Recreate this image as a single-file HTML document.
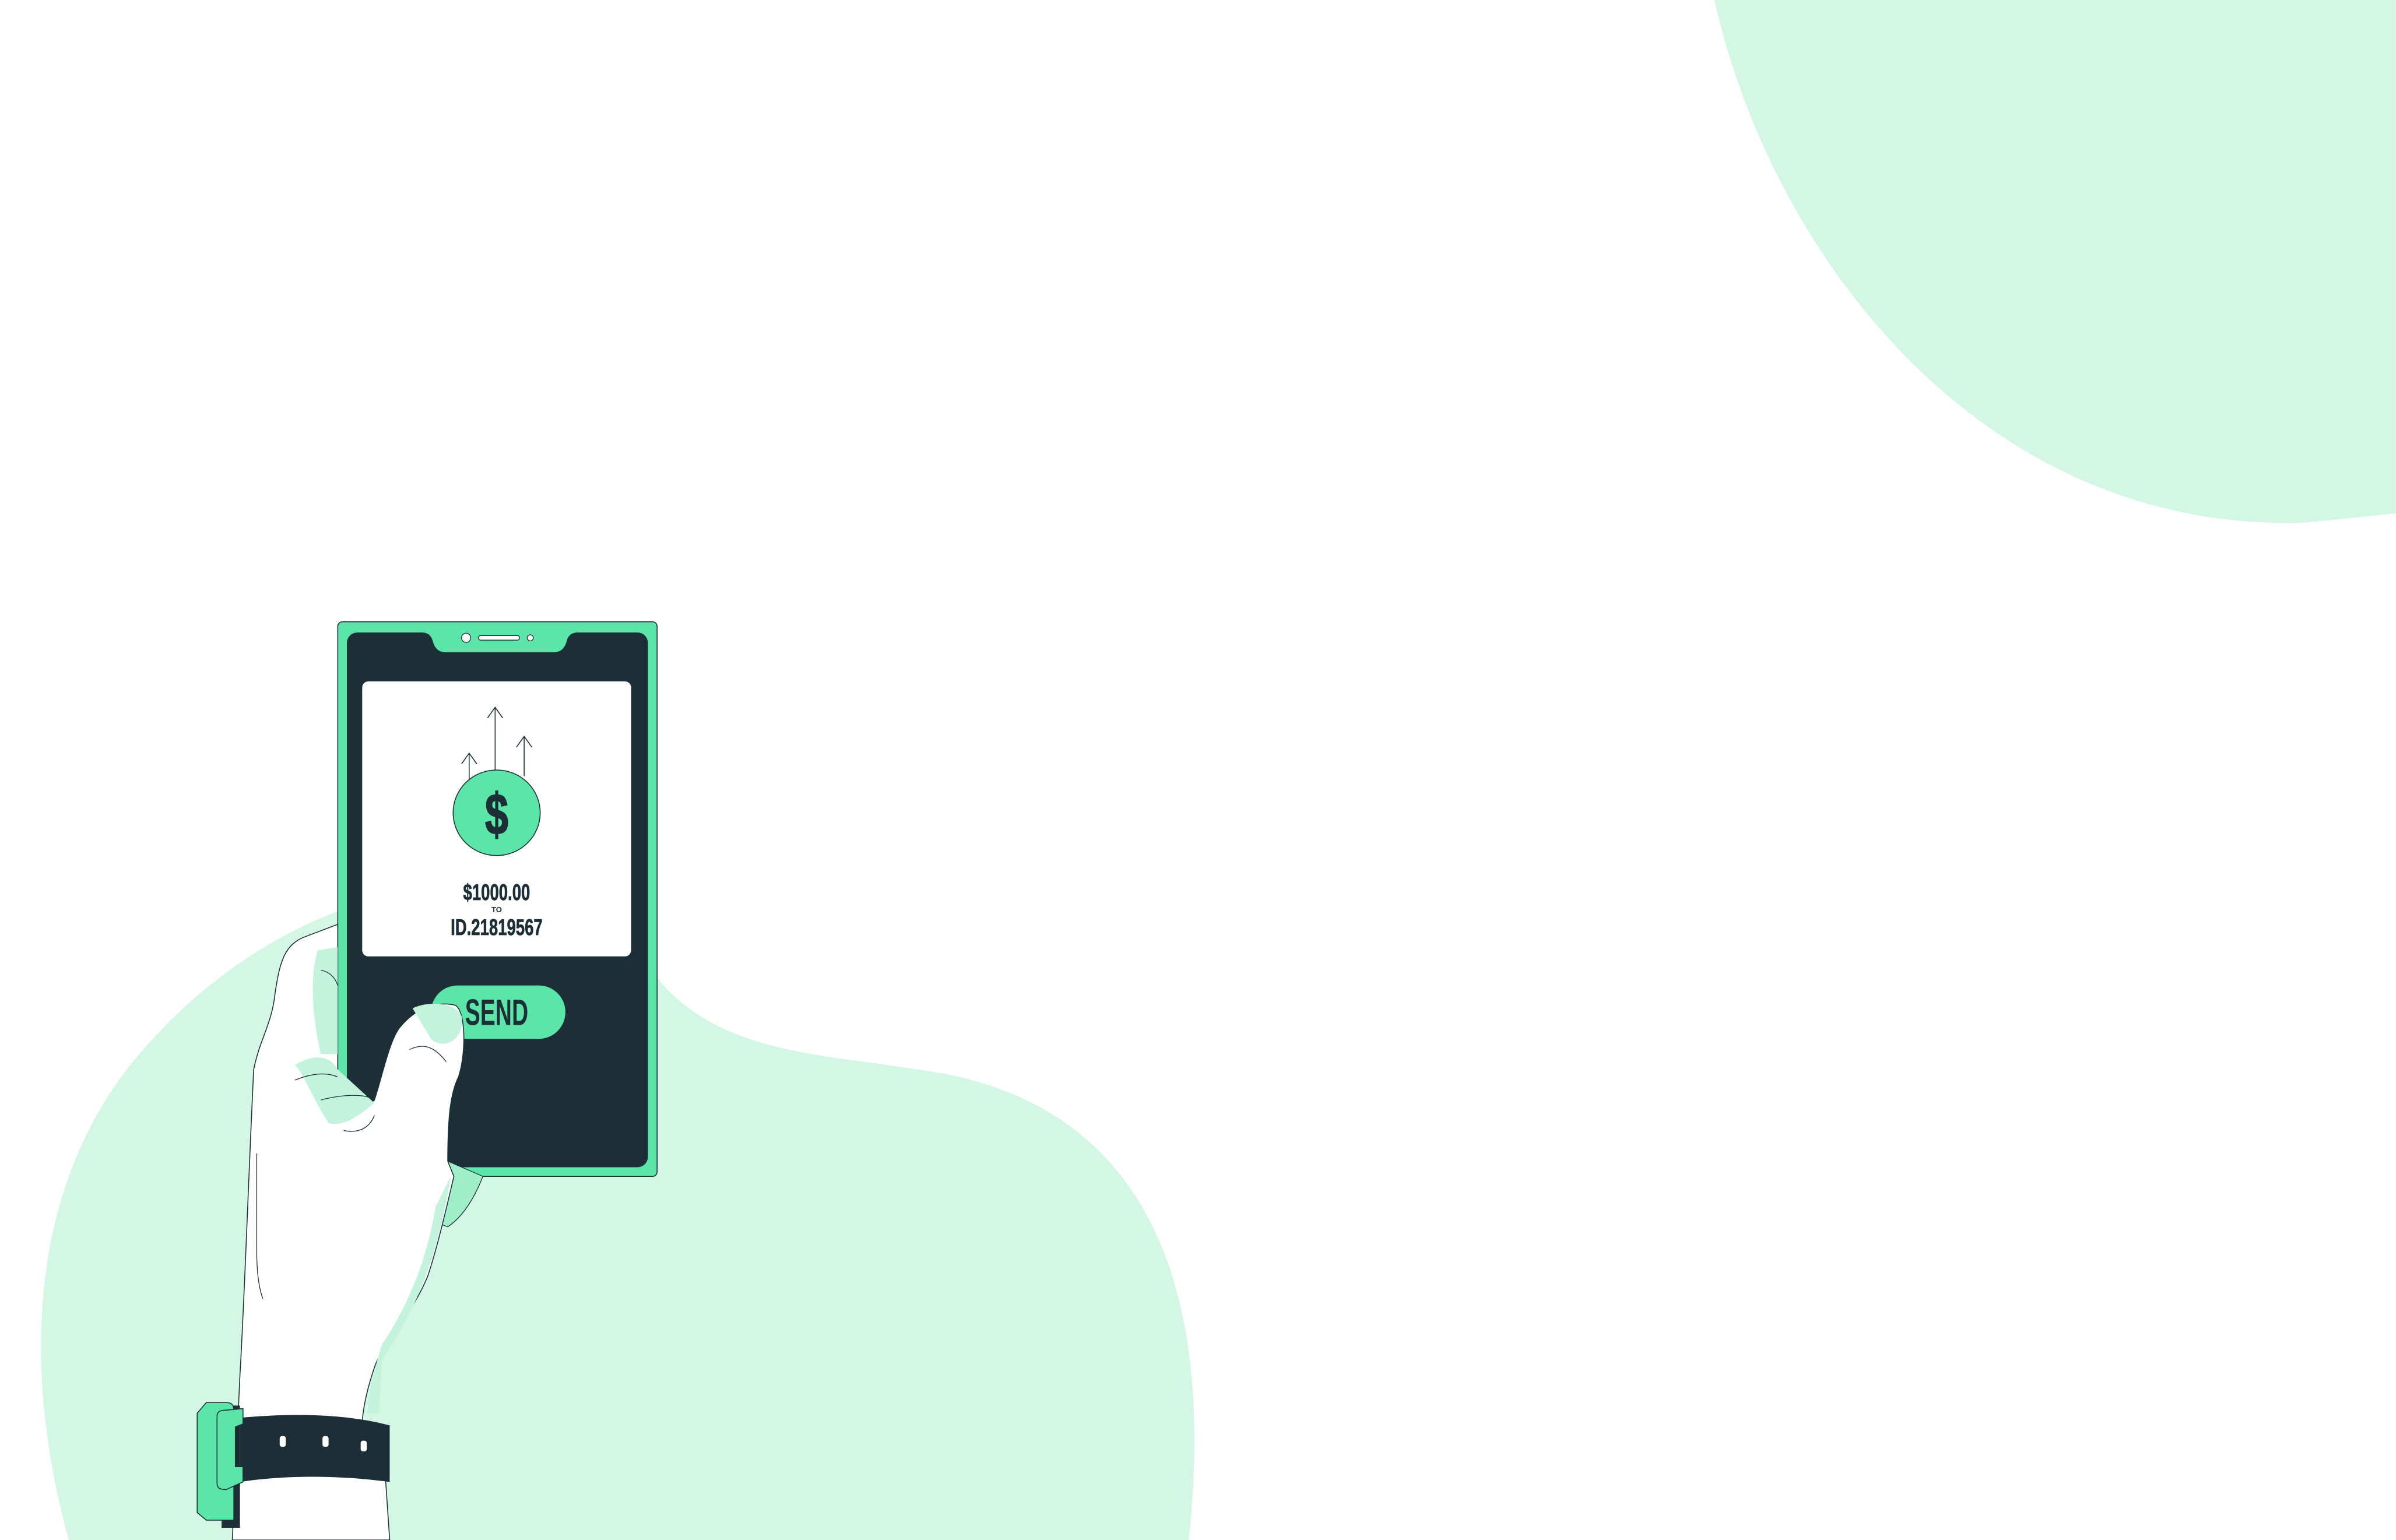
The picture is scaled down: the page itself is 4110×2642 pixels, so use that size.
<!DOCTYPE html>
<html><head><meta charset="utf-8"><style>html,body{margin:0;padding:0;background:#fff;overflow:hidden}svg{display:block}</style></head>
<body>
<svg width="4110" height="2642" viewBox="0 0 1568 1008" xmlns="http://www.w3.org/2000/svg">
<rect width="1568" height="1008" fill="#fff"/>
<path d="M1122,0 C1160,170 1300,350 1510,342 L1568,336 L1568,0 Z" fill="#d4f6e5"/>
<path d="M45,1008 C15,900 15,770 100,680 C140,636 190,605 240,590 L430,640 C470,690 540,690 600,700 C720,715 800,800 778,1008 Z" fill="#d4f6e5"/>
<!-- phone -->
<rect x="221" y="407" width="209" height="363" rx="3" fill="#5ce5a8" stroke="#1c2e36" stroke-width="0.6"/>
<path d="M234,414 L276,414 C280,414 282,416 283,419 C284,423 286,427 292,427 L362,427 C368,427 370,423 371,419 C372,416 374,414 378,414 L417,414 C421,414 424,417 424,421 L424,757 C424,761 421,764 417,764 L234,764 C230,764 227,761 227,757 L227,421 C227,417 230,414 234,414 Z" fill="#1c2e36"/>
<circle cx="305" cy="417.5" r="3" fill="#fff" stroke="#1c2e36" stroke-width="0.5"/>
<rect x="313" y="416" width="27" height="3" rx="1.5" fill="#fff" stroke="#1c2e36" stroke-width="0.5"/>
<circle cx="347" cy="417.5" r="2" fill="#fff" stroke="#1c2e36" stroke-width="0.5"/>
<rect x="237" y="446" width="176" height="180" rx="4" fill="#fff"/>
<g stroke="#1c2e36" stroke-width="0.6" fill="none">
<path d="M307,512 L307,493 M302,500 L307,493 L312,500"/>
<path d="M324,505 L324,463 M319,470 L324,463 L329,470"/>
<path d="M343,508 L343,482 M338,489 L343,482 L348,489"/>
</g>
<ellipse cx="325" cy="532" rx="28.5" ry="28" fill="#5ce5a8" stroke="#1c2e36" stroke-width="0.6"/>
<text x="325" y="546" text-anchor="middle" font-family="Liberation Sans, sans-serif" font-weight="bold" font-size="38" fill="#1c2e36" stroke="#1c2e36" stroke-width="0.8" transform="translate(325 0) scale(0.72 1) translate(-325 0)">$</text>
<g font-family="Liberation Sans, sans-serif" font-weight="bold" fill="#1c2e36" text-anchor="middle" stroke="#1c2e36" stroke-width="0.3">
<text x="325" y="589" font-size="15" transform="translate(325 0) scale(0.7 1) translate(-325 0)">$1000.00</text>
<text x="325" y="597" font-size="5" stroke-width="0">TO</text>
<text x="325" y="612" font-size="15" transform="translate(325 0) scale(0.7 1) translate(-325 0)">ID.21819567</text>
</g>
<rect x="282" y="645" width="88" height="35" rx="17.5" fill="#5ce5a8"/>
<text x="325" y="671" text-anchor="middle" font-family="Liberation Sans, sans-serif" font-weight="bold" font-size="24" fill="#1c2e36" transform="translate(325 0) scale(0.62 1) translate(-325 0)">SEND</text>
<!-- hand -->
<path d="M293,760 L316,770 C312,780 305,795 293,803 L285,800 Z" fill="#a0efc9" stroke="#1c2e36" stroke-width="0.5"/>
<path d="M152,1008 L157,900 C160,850 163,760 166,700 C170,680 178,670 180,650 C183,630 186,618 200,613 L221,605 L221,720 C230,725 240,725 245,720 C250,705 255,680 262,672 C272,660 285,655 298,658 C305,662 305,690 300,705 C295,715 293,730 293,760 L297,770 C290,800 285,820 280,835 C270,860 250,880 245,895 C240,910 238,920 237,930 L250,935 L255,1008 Z" fill="#fff" stroke="#1c2e36" stroke-width="0.6"/>
<path d="M208,622 C202,640 205,670 210,690 L221,690 L221,620 Z" fill="#c3f3dd"/>
<path d="M285,790 C280,820 270,850 250,880 C245,895 242,910 240,925 L248,925 L250,890 C270,860 285,830 295,770 Z" fill="#c3f3dd"/>
<path d="M270,660 C280,655 298,656 302,665 C305,680 290,688 282,680 Z" fill="#c3f3dd"/>
<path d="M193,697 C205,690 215,690 221,700 L245,722 C235,730 225,738 215,735 C205,720 200,705 193,697 Z" fill="#c3f3dd"/>
<g stroke="#1c2e36" stroke-width="0.5" fill="none">
<path d="M210,720 C225,716 240,716 245,720"/>
<path d="M225,740 C235,742 242,738 245,730"/>
<path d="M193,707 C205,702 215,702 221,705"/>
<path d="M268,687 C278,682 285,686 292,695"/>
<path d="M168,755 L168,820 C168,835 170,845 172,850"/>
<path d="M210,635 C215,636 219,639 221,645"/>
</g>
<!-- watch -->
<path d="M157,928 C190,925 225,925 255,933 L255,970 C225,966 190,965 157,970 Z" fill="#1c2e36"/>
<rect x="183" y="940" width="4" height="7" rx="1.5" fill="#fff"/>
<rect x="211" y="940" width="4" height="7" rx="1.5" fill="#fff"/>
<rect x="236" y="943" width="4" height="7" rx="1.5" fill="#fff"/>
<rect x="145" y="920" width="12" height="80" fill="#1c2e36"/>
<path d="M135,918 L148,918 C152,918 153,920 153,923 L153,995 L135,995 L129,990 L129,925 Z" fill="#5ce5a8" stroke="#1c2e36" stroke-width="0.6"/>
<path d="M142,927 C142,924 144,923 148,923 L159,922 L159,932 L154,934 L154,960 L159,960 L159,970 L148,975 C144,975 142,974 142,971 Z" fill="#5ce5a8" stroke="#1c2e36" stroke-width="0.6"/>
</svg>
</body></html>
